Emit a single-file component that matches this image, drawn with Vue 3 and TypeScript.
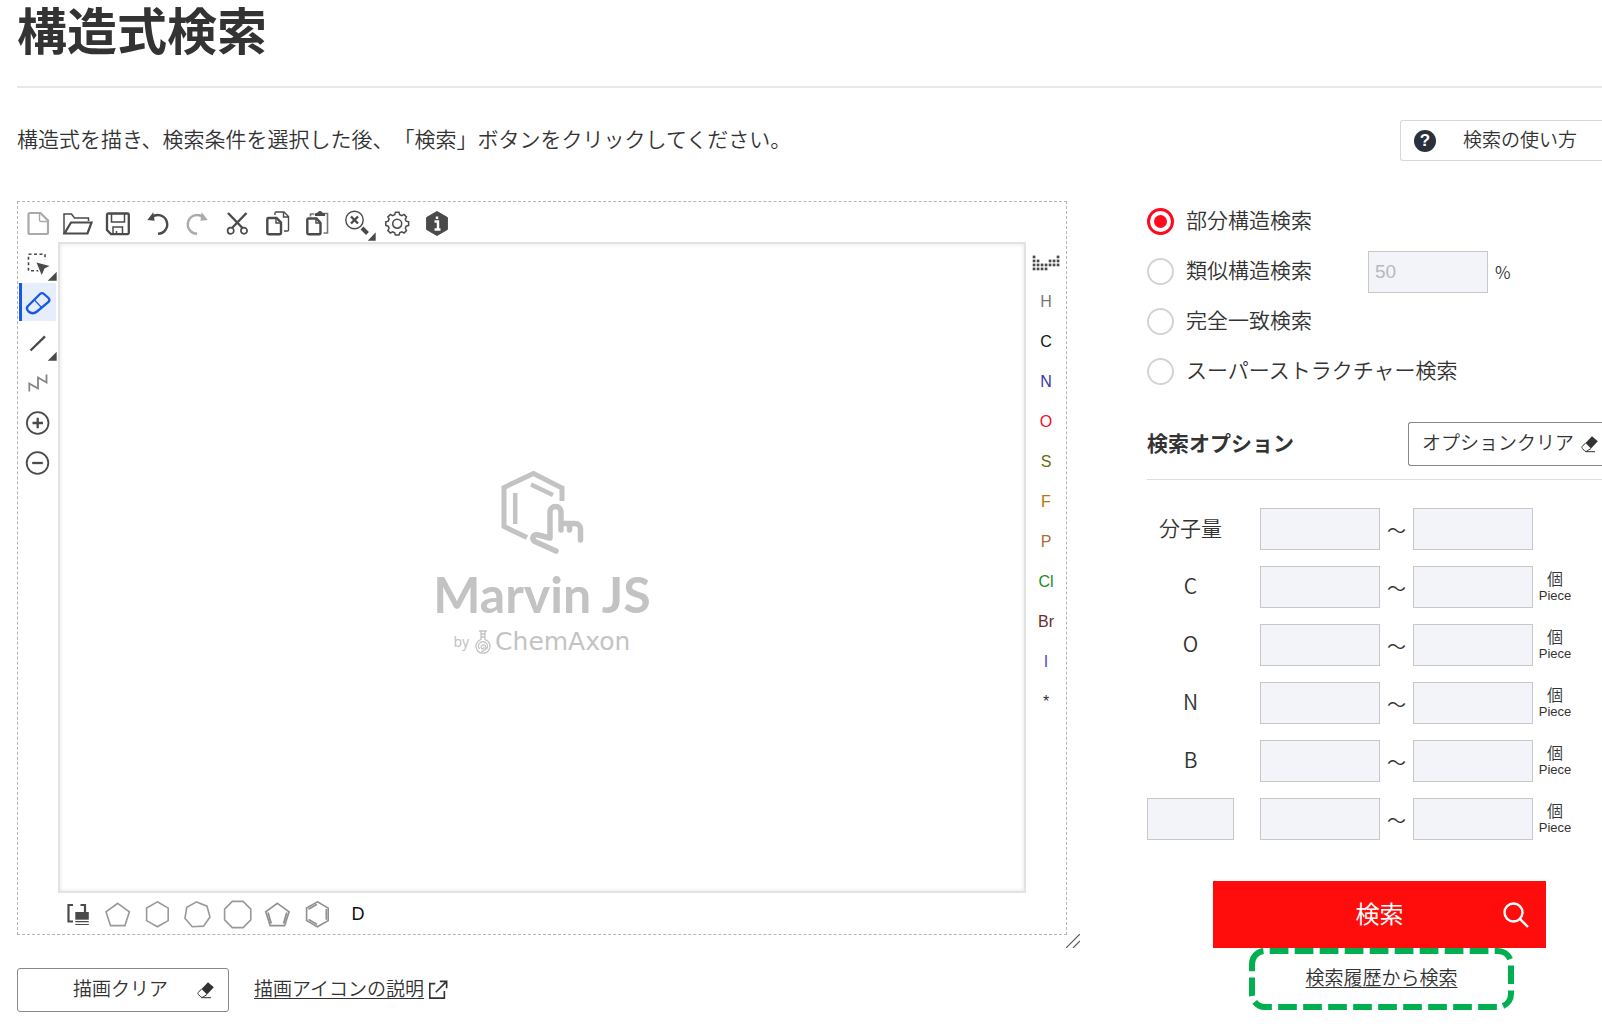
<script setup lang="ts">
import { ref } from 'vue'

interface Shape {
  d: string
  fill?: string
  stroke?: string
  w?: number
  dash?: string
}
interface Tool {
  name: string
  shapes: Shape[]
  active?: boolean
}
interface Atom {
  symbol: string
  color: string
}

const INK = '#4a4a4a'
const PALE = '#aaaaaa'
const BLUE = '#1659e6'

function ring(sides: number, cx: number, cy: number, r: number, startDeg: number): string {
  const pts = Array.from({ length: sides }, (_, i) => {
    const a = ((startDeg + (360 / sides) * i) * Math.PI) / 180
    return `${(cx + r * Math.cos(a)).toFixed(1)} ${(cy + r * Math.sin(a)).toFixed(1)}`
  })
  return `M${pts.join('L')}Z`
}

function circle(cx: number, cy: number, r: number): string {
  return `M${cx - r} ${cy}a${r} ${r} 0 1 0 ${2 * r} 0a${r} ${r} 0 1 0 ${-2 * r} 0Z`
}

function gear(cx: number, cy: number, teeth: number, outer: number, inner: number): string {
  const step = 360 / teeth
  const profile: [number, number][] = [[-0.34, inner], [-0.2, outer], [0.2, outer], [0.34, inner]]
  const pts: string[] = []
  for (let i = 0; i < teeth; i++) {
    for (const [o, r] of profile) {
      const a = ((i + o) * step * Math.PI) / 180
      pts.push(`${(cx + r * Math.sin(a)).toFixed(1)} ${(cy - r * Math.cos(a)).toFixed(1)}`)
    }
  }
  return `M${pts.join('L')}Z`
}

const fileTools: Tool[] = [
  { name: '新規', shapes: [{ d: 'M12 11h10.500l7.500 7.500V31a1 1 0 0 1-1 1H12a1.500 1.500 0 0 1-1.500-1.500v-18A1.500 1.500 0 0 1 12 11Z', stroke: PALE, w: 2.2 }, { d: 'M21.500 11v7a1.500 1.500 0 0 0 1.500 1.500h7', stroke: PALE, w: 1.4 }] },
  { name: '開く', shapes: [{ d: 'M30.500 19v-3H16.500l-3-4H6v20', stroke: INK, w: 1.5 }, { d: 'M13 20.500h20.500L29.500 31.500H6.500Z', stroke: INK, w: 2.2 }] },
  { name: '保存', shapes: [{ d: 'M11 11.500h18.500a1.300 1.300 0 0 1 1.300 1.300v18a1.300 1.300 0 0 1-1.300 1.300H13l-4-4V13a1.500 1.500 0 0 1 2-1.500Z', stroke: INK, w: 2.3 }, { d: 'M13.500 12v8h13v-8M15 32v-7h9.500v7M18.500 29v3', stroke: INK, w: 1.5 }] },
  { name: '元に戻す', shapes: [{ d: 'M14 15A9.400 9.400 0 1 1 20 31.800', stroke: INK, w: 2.4 }, { d: 'M15.300 10.300L9.300 18l7.300.700Z', fill: INK }] },
  { name: 'やり直し', shapes: [{ d: 'M25 15A9.400 9.400 0 1 0 19 31.800', stroke: PALE, w: 2.4 }, { d: 'M23.700 10.300l6 7.700-7.300.700Z', fill: PALE }] },
  { name: '切り取り', shapes: [{ d: 'M10 11l14.500 15M28.500 11L14 26', stroke: INK, w: 2.4 }, { d: circle(12.7, 28.7, 3.1) + circle(26, 28.7, 3.1), stroke: INK, w: 1.7 }] },
  { name: 'コピー', shapes: [{ d: 'M17 13v-2a1 1 0 0 1 1-1h8l4.500 4.500V28a1 1 0 0 1-1 1H26M25.500 10v5h5', stroke: INK, w: 1.4 }, { d: 'M10.500 16h8l4.500 4.500V31a1.200 1.200 0 0 1-1.200 1.200H10.500A1.200 1.200 0 0 1 9.300 31V17.200A1.200 1.200 0 0 1 10.500 16Z', stroke: INK, w: 2.4 }, { d: 'M18 16v5h5', stroke: INK, w: 1.4 }] },
  { name: '貼り付け', shapes: [{ d: 'M12.500 14.500V12h4M26 11.500h3.500V31h-4', stroke: '#777', w: 1.6 }, { d: 'M17 14v-2.500l3-1.200a2.200 2.200 0 0 1 4 0l3 1.200V14Z', fill: INK }, { d: 'M10.500 16.500h8l4 4.500V31a1.200 1.200 0 0 1-1.200 1.200H10.500A1.200 1.200 0 0 1 9.300 31V17.500A1.200 1.200 0 0 1 10.500 16.500Z', stroke: INK, w: 2.4 }, { d: 'M18 16.500v4.500h4.500', stroke: INK, w: 1.4 }] },
  { name: '表示倍率', shapes: [{ d: circle(16.5, 18, 8.700), stroke: INK, w: 1.4 }, { d: 'M13 14.500l7 7M20 14.500l-7 7', stroke: INK, w: 2.4 }, { d: 'M24 26l5.500 5.500', stroke: INK, w: 4 }, { d: 'M29.700 38.700L37.700 30.300V38.700Z', fill: INK }] },
  { name: '設定', shapes: [{ d: gear(19.2, 21.7, 8, 11.5, 9.3), stroke: INK, w: 1.5 }, { d: circle(19.2, 21.7, 4.5), stroke: INK, w: 1.5 }] },
  { name: '情報', shapes: [{ d: ring(6, 19, 21.5, 12, -90), fill: INK, stroke: INK, w: 1 }, { d: 'M16.500 19.500h3.500v7M16.500 27.500h6M19 14.500v2.500', stroke: '#fff', w: 2.4 }] },
]

const drawTools: Tool[] = [
  { name: '選択', shapes: [{ d: 'M10.500 11.200h16.500v16.500h-16.500Z', stroke: INK, w: 1.6, dash: '3 2.500' }, { d: 'M16 17h15v15h-9Z', fill: '#fff' }, { d: 'M18.500 19.500L31.500 23l-5 2.500L23.700 32Z', fill: INK }, { d: 'M29.700 37.700l9-9v9Z', fill: INK }] },
  { name: '消しゴム', active: true, shapes: [{ d: 'M9.500 23.500L22 11a3 3 0 0 1 4 0l4.500 4a3 3 0 0 1 0 4L19 28.500c-2.500 2-6 2-8.500 0-2-2-2-3.500-1-5Z', stroke: BLUE, w: 2.3 }, { d: 'M16.500 17l7 7.500', stroke: BLUE, w: 1.2 }] },
  { name: '結合', shapes: [{ d: 'M12.500 27.500L27 13.300', stroke: INK, w: 2.4 }, { d: 'M29.700 37.700l9-9v9Z', fill: INK }] },
  { name: '鎖', shapes: [{ d: 'M11.300 28.500V20.500L20 25.500V14.500L28.500 19.500V11.500', stroke: '#858585', w: 1.8 }] },
  { name: '電荷を増やす', shapes: [{ d: circle(19.7, 20, 10.800), stroke: INK, w: 1.8 }, { d: 'M14.500 20h10.500M19.700 14.700v10.600', stroke: INK, w: 2.3 }] },
  { name: '電荷を減らす', shapes: [{ d: circle(19.500, 20, 10.800), stroke: INK, w: 1.8 }, { d: 'M14.200 20h10.600', stroke: INK, w: 2.3 }] },
]

const ringTools: Tool[] = [
  { name: 'テンプレート', shapes: [{ d: 'M15 12h-4.500v16.500H15M22.500 12h4.500v7', stroke: INK, w: 2.2 }, { d: 'M17.300 19h13.500v7.700h-13.500Z', fill: INK }, { d: 'M17.300 28.700h13.500M17.300 31.500h13.500', stroke: INK, w: 1.2 }] },
  { name: '五員環', shapes: [{ d: ring(5, 19.7, 22.6, 12.3, -90), stroke: '#999', w: 1.6 }] },
  { name: '六員環', shapes: [{ d: ring(6, 19.4, 21.3, 12.5, -90), stroke: '#999', w: 1.6 }] },
  { name: '七員環', shapes: [{ d: ring(7, 19.3, 21.8, 12.9, -93), stroke: '#999', w: 1.6 }] },
  { name: '八員環', shapes: [{ d: ring(8, 19.7, 21.5, 14.2, -67.5), stroke: '#999', w: 1.6 }] },
  { name: 'シクロペンタジエン', shapes: [{ d: ring(5, 19.4, 22.6, 12.3, -90), stroke: '#909090', w: 1.6 }, { d: 'M10 19.500L13.200 30.500M28.800 19.500L25.600 30.500', stroke: '#909090', w: 1.8 }] },
  { name: 'ベンゼン', shapes: [{ d: ring(6, 19.4, 21.3, 12.5, -90), stroke: '#909090', w: 1.6 }, { d: 'M10.500 16.200L19 11.300M10.500 26.500L19 31.300M28.300 16V26.700', stroke: '#909090', w: 1.6 }] },
]

const periodicColumns: number[][] = [[14, 18, 22, 26], [18, 22, 26], [22, 26], [22, 26], [18, 22], [18, 22], [14, 18, 22]]

const atoms: Atom[] = [
  { symbol: 'H', color: '#777777' },
  { symbol: 'C', color: '#111111' },
  { symbol: 'N', color: '#3939a8' },
  { symbol: 'O', color: '#e8102c' },
  { symbol: 'S', color: '#6b6b10' },
  { symbol: 'F', color: '#b07a00' },
  { symbol: 'P', color: '#b06a3a' },
  { symbol: 'Cl', color: '#1f8a1f' },
  { symbol: 'Br', color: '#6b2c2c' },
  { symbol: 'I', color: '#5a4fb8' },
  { symbol: '*', color: '#333333' },
]

const modes = ['部分構造検索', '類似構造検索', '完全一致検索', 'スーパーストラクチャー検索']
const mode = ref(modes[0])
const elements = ['分子量', 'C', 'O', 'N', 'B', '']
</script>

<template>
  <main class="page">
    <h1>構造式検索</h1>
    <div class="intro">
      <p class="ja">構造式を描き、検索条件を選択した後、「検索」ボタンをクリックしてください。</p>
      <button type="button" class="help">
        <span class="help-mark">?</span><span class="ja">検索の使い方</span>
      </button>
    </div>

    <div class="columns">
      <section>
        <div class="editor">
          <div class="bar top">
            <button v-for="t in fileTools" :key="t.name" type="button" class="tool" :aria-label="t.name">
              <svg viewBox="0 0 40 40"><path v-for="(s, i) in t.shapes" :key="i" :d="s.d" :fill="s.fill ?? 'none'" :stroke="s.stroke ?? 'none'" :stroke-width="s.w" :stroke-dasharray="s.dash" /></svg>
            </button>
          </div>
          <div class="bar side">
            <button v-for="t in drawTools" :key="t.name" type="button" class="tool" :class="{ active: t.active }" :aria-label="t.name">
              <svg viewBox="0 0 40 40"><path v-for="(s, i) in t.shapes" :key="i" :d="s.d" :fill="s.fill ?? 'none'" :stroke="s.stroke ?? 'none'" :stroke-width="s.w" :stroke-dasharray="s.dash" /></svg>
            </button>
          </div>
          <div class="canvas">
            <svg class="hand" viewBox="0 0 84 86" fill="none" stroke="#c3c3c3">
              <path d="M27 67.500L4 56.500V17.500L33.500 3.500L62 18v13" stroke-width="5" />
              <path d="M15.200 23v31M31 14.500L53 25" stroke-width="4.500" />
              <path d="M56 81L35 71.500C31 69.500 33 64 38 65L50 68V42a5.500 5.500 0 0 1 11 0V60M61 53.500H75a5.500 5.500 0 0 1 5.500 5.500V70M69.500 54V60" stroke-width="5.500" stroke-linecap="round" stroke-linejoin="round" />
            </svg>
            <div class="marvin">Marvin JS</div>
            <div class="chem">
              <span class="by">by</span>
              <svg class="flask" viewBox="0 0 16 24" fill="none" stroke="#c3c3c3" stroke-width="1.300">
                <path d="M4 1h8M6 1v8.500a7 7 0 1 0 4 0V1M5.500 4h5M5.500 7h5" />
                <path d="M4.500 19a4.500 4.500 0 1 1 7 0M6 21.500c4 0 6-3 4.500-5.500-2-2.500-5.500 0-4 2s3.500 0 2-1" />
              </svg>
              <span>ChemAxon</span>
            </div>
          </div>
          <div class="bar side">
            <button type="button" class="tool" aria-label="周期表">
              <svg viewBox="0 0 40 40">
                <g v-for="(col, c) in periodicColumns" :key="c"><rect v-for="y in col" :key="y" :x="6.700 + c * 4" :y="y - 1.400" width="2.700" height="2.700" fill="#4a4a4a" /></g>
              </svg>
            </button>
            <button v-for="a in atoms" :key="a.symbol" type="button" class="tool atom" :style="{ color: a.color }">{{ a.symbol }}</button>
          </div>
          <div class="bar bottom">
            <button v-for="t in ringTools" :key="t.name" type="button" class="tool" :aria-label="t.name">
              <svg viewBox="0 0 40 40"><path v-for="(s, i) in t.shapes" :key="i" :d="s.d" :fill="s.fill ?? 'none'" :stroke="s.stroke ?? 'none'" :stroke-width="s.w" /></svg>
            </button>
            <button type="button" class="tool deuterium">D</button>
          </div>
          <svg class="grip" viewBox="0 0 14 14" stroke="#555" stroke-width="1.200"><path d="M0 14L14 0M7 14L14 7" /></svg>
        </div>

        <div class="actions">
          <button type="button" class="clear">
            <span class="ja">描画クリア</span>
            <svg class="rubber" viewBox="0 0 18 18"><path d="M11 1.200l5.800 5L10 13.500 4.500 8Z" fill="#333" /><path d="M4.500 8L1.200 11.500q-.700 1 .2 2l2.500 2.600q1 .700 2 0L10 13.500M4.500 16.700H14" fill="none" stroke="#333" /></svg>
          </button>
          <a class="ja" href="#icons">描画アイコンの説明</a>
          <svg class="external" viewBox="0 0 22 22" fill="none" stroke="#333" stroke-width="1.800"><path d="M8 4H2v16h16v-8M8.500 13.500L20 2M13 1.500h7.500V9" /></svg>
        </div>
      </section>

      <form class="search" @submit.prevent>
        <div class="modes">
          <div v-for="m in modes" :key="m" class="mode">
            <label><input v-model="mode" type="radio" name="mode" :value="m" /><span class="ja">{{ m }}</span></label>
            <template v-if="m === '類似構造検索'">
              <input class="field ratio" type="text" placeholder="50" aria-label="類似度" />
              <span class="percent">%</span>
            </template>
          </div>
        </div>

        <div class="options-head">
          <h2 class="ja">検索オプション</h2>
          <button type="button" class="clear options-clear">
            <span class="ja">オプションクリア</span>
            <svg class="rubber" viewBox="0 0 18 18"><path d="M11 1.200l5.800 5L10 13.500 4.500 8Z" fill="#333" /><path d="M4.500 8L1.200 11.500q-.700 1 .2 2l2.500 2.600q1 .700 2 0L10 13.500M4.500 16.700H14" fill="none" stroke="#333" /></svg>
          </button>
        </div>

        <div class="ranges">
          <div v-for="(e, i) in elements" :key="i" class="range">
            <label v-if="e" class="ja" :for="`from-${i}`">{{ e }}</label>
            <input v-else class="field" type="text" aria-label="元素" />
            <input :id="`from-${i}`" class="field from" type="text" :aria-label="`${e} 下限`" />
            <span class="tilde">～</span>
            <input class="field" type="text" :aria-label="`${e} 上限`" />
            <span v-if="i > 0" class="unit">個<small>Piece</small></span>
          </div>
        </div>

        <button type="submit" class="submit">
          <span class="ja">検索</span>
          <svg viewBox="0 0 26 26" fill="none" stroke="#fff" stroke-width="2.400"><circle cx="10.500" cy="10.500" r="9" /><path d="M16.800 16.800L25 25" /></svg>
        </button>
        <div class="history">
          <svg viewBox="0 0 265 62" fill="none" stroke="#00b050" stroke-width="6"><path d="M3 16A13 13 0 0 1 16 3H249A13 13 0 0 1 262 16V46A13 13 0 0 1 249 59H16A13 13 0 0 1 3 46Z" stroke-dasharray="18.700 6.300" /></svg>
          <a class="ja" href="#history">検索履歴から検索</a>
        </div>
      </form>
    </div>
  </main>
</template>

<style>
body {
  margin: 0;
  background: #fff;
}
</style>

<style scoped>
.page {
  padding-left: 17px;
  color: #333;
  font-family: "Noto Sans CJK JP", sans-serif;
  font-size: 21px;
  font-weight: 350;
  text-spacing-trim: space-all;
}
* {
  box-sizing: border-box;
}
button {
  margin: 0;
  padding: 0;
  border: 0;
  background: none;
  color: inherit;
  font: inherit;
}
svg {
  display: block;
  flex: none;
}
a {
  color: #333;
  font-size: 19px;
  text-underline-offset: 2px;
  text-decoration-thickness: 1px;
}
/* Noto CJK glyphs sit low in their line box; this lifts them to the optical centre */
.ja {
  padding-bottom: 5px;
}
h1 {
  margin: 0;
  padding-bottom: 30px;
  border-bottom: 2px solid #e8e8e8;
  font-size: 50px;
  font-weight: 700;
  line-height: 56px;
}
.intro {
  display: flex;
  align-items: center;
  justify-content: space-between;
  margin: 32px 0 40px;
}
.intro p {
  margin: 0;
  line-height: 32px;
}
.help {
  display: flex;
  align-items: center;
  width: 202px;
  height: 41px;
  padding-left: 13px;
  border: 1px solid #d8d8d8;
  border-right: 0;
  border-radius: 3px 0 0 3px;
  font-size: 19px;
}
.help-mark {
  width: 22px;
  height: 22px;
  margin-right: 27px;
  border-radius: 50%;
  background: #2a303c;
  color: #fff;
  font: 700 17px/22px "Liberation Sans", sans-serif;
  text-align: center;
}
.columns {
  display: grid;
  grid-template-columns: minmax(0, 1fr) 455px;
  column-gap: 80px;
}
.editor {
  position: relative;
  display: grid;
  grid-template-columns: 40px 1fr 40px;
  grid-template-rows: 40px auto 41px;
  border: 1px dashed #b4b4b4;
}
.bar {
  display: flex;
}
.top {
  grid-column: 1 / -1;
}
.side {
  flex-direction: column;
  padding-top: 1px;
}
.bottom {
  grid-column: 2 / -1;
}
.tool {
  width: 40px;
  height: 40px;
}
.tool svg {
  width: 40px;
  height: 40px;
}
.active {
  background: linear-gradient(90deg, #1659e6 3px, #e6edfb 3px) 1px 0 / 37px 38px no-repeat;
}
.atom {
  padding-bottom: 2px;
  font-family: "Liberation Sans", sans-serif;
  font-size: 16px;
  font-weight: 400;
}
.deuterium {
  padding-top: 3px;
  color: #111;
  font-family: "Liberation Sans", sans-serif;
  font-size: 18px;
  font-weight: 400;
}
.canvas {
  display: flex;
  flex-direction: column;
  align-items: center;
  justify-content: center;
  min-height: 651px;
  padding-bottom: 10px;
  border: 2px solid #e2e2e2;
  box-shadow: inset 0 0 4px #e4e4e4;
  color: #c3c3c3;
}
.hand {
  width: 84px;
  height: 86px;
}
.marvin {
  margin-top: 4px;
  font-family: Lato, sans-serif;
  font-size: 50px;
  font-weight: 700;
  line-height: 68px;
}
.chem {
  display: flex;
  align-items: center;
  gap: 4px;
  font-family: "DejaVu Sans", sans-serif;
  font-size: 25px;
  font-weight: 400;
  line-height: 28px;
}
.by {
  margin-right: 2px;
  font-family: "Noto Sans", sans-serif;
  font-size: 14px;
}
.flask {
  width: 16px;
  height: 24px;
}
.grip {
  position: absolute;
  right: -14px;
  bottom: -14px;
  width: 14px;
  height: 14px;
}
.actions {
  display: flex;
  align-items: center;
  margin-top: 33px;
}
.clear {
  display: flex;
  align-items: center;
  justify-content: space-between;
  width: 212px;
  height: 44px;
  padding: 0 13px 0 55px;
  border: 1px solid #888;
  border-radius: 3px;
  font-size: 19px;
}
.rubber {
  width: 18px;
  height: 18px;
}
.actions a {
  margin: 0 4px 0 25px;
}
.external {
  width: 20px;
  height: 20px;
}
.modes {
  display: grid;
  gap: 9px;
}
.mode {
  display: flex;
  align-items: center;
  height: 41px;
}
.mode label {
  display: flex;
  align-items: center;
}
input[type="radio"] {
  appearance: none;
  width: 27px;
  height: 27px;
  margin: 0 12px 0 0;
  border: 2px solid #d0d4d8;
  border-radius: 50%;
}
input[type="radio"]:checked {
  border: 3px solid #ff0a1e;
  background: #ff0a1e content-box;
  padding: 4px;
}
.field {
  width: 100%;
  height: 42px;
  padding: 0 6px;
  border: 1px solid #c8c8c8;
  border-radius: 0;
  background: #f3f4f9;
  color: #333;
  font: 400 19px "Liberation Sans", sans-serif;
}
.field::placeholder {
  color: #b8b8b8;
}
.ratio {
  width: 120px;
  margin: 0 7px 0 56px;
}
.percent {
  font-size: 17px;
}
.options-head {
  display: flex;
  align-items: center;
  justify-content: space-between;
  margin-top: 30px;
  padding-bottom: 13px;
  border-bottom: 1px solid #ddd;
}
h2 {
  margin: 0;
  font-size: 21px;
  font-weight: 700;
}
.options-clear {
  width: 194px;
  padding: 0 3px 0 13px;
  border-right: 0;
  border-radius: 3px 0 0 3px;
}
.ranges {
  display: flex;
  flex-direction: column;
  gap: 16px;
  margin-top: 28px;
}
.range {
  display: grid;
  grid-template-columns: 87px 146px 33px 120px 44px;
  align-items: center;
  height: 42px;
  text-align: center;
}
.from {
  width: 120px;
  margin-left: 26px;
}
.tilde {
  font-size: 19px;
}
.unit {
  display: flex;
  flex-direction: column;
  font-size: 16px;
  line-height: 18px;
}
.unit small {
  font-family: "Liberation Sans", sans-serif;
  font-size: 13px;
  font-weight: 400;
}
.submit {
  display: grid;
  grid-template-columns: 1fr auto 1fr;
  align-items: center;
  width: 333px;
  height: 67px;
  margin: 41px 0 0 66px;
  padding-right: 17px;
  padding-left: 17px;
  background: #ff0c0c;
  color: #fff;
  font-size: 24px;
  font-weight: 400;
}
.submit::before {
  content: "";
}
.submit svg {
  justify-self: end;
  width: 26px;
  height: 26px;
}
.history {
  position: relative;
  display: flex;
  align-items: center;
  justify-content: center;
  width: 265px;
  height: 62px;
  margin-left: 102px;
}
.history svg {
  position: absolute;
  inset: 0;
}
</style>
